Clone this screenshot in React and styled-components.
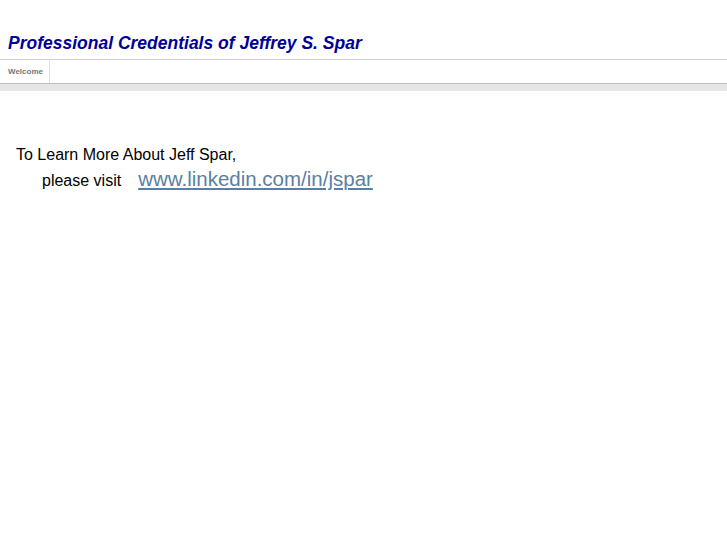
import React from "react";
import styled, { createGlobalStyle } from "styled-components";

const GlobalStyle = createGlobalStyle`
  body {
    margin: 0;
    background: #fff;
    font-family: "Liberation Sans", Arial, sans-serif;
  }
`;

const Header = styled.div`
  padding: 33px 8px 0;
  height: 26px;
  border-bottom: 1px solid #cfcfcf;
`;

const Title = styled.h1`
  margin: 0;
  font-size: 17.5px;
  font-weight: bold;
  font-style: italic;
  color: #000099;
  line-height: 20px;
`;

const NavBar = styled.div`
  display: flex;
  height: 23px;
  border-bottom: 1px solid #bdbdbd;
`;

const Tab = styled.div`
  width: 41px;
  padding-left: 8px;
  border-right: 1px solid #e0e0e0;
  font-size: 8px;
  font-weight: bold;
  color: #777;
  display: flex;
  align-items: center;
`;

const Band = styled.div`
  height: 7px;
  background: #e6e6e6;
`;

const Content = styled.div`
  padding: 52px 16px 0;
  color: #000;
`;

const Line = styled.div`
  font-size: 16px;
  line-height: 24px;
  padding-left: ${(p) => p.indent || 0}px;
`;

const Link = styled.a`
  font-size: 20.5px;
  color: #5a7fa3;
  margin-left: 17px;
`;

export default function App() {
  return (
    <>
      <GlobalStyle />
      <Header>
        <Title>Professional Credentials of Jeffrey S. Spar</Title>
      </Header>
      <NavBar>
        <Tab>Welcome</Tab>
      </NavBar>
      <Band />
      <Content>
        <Line>To Learn More About Jeff Spar,</Line>
        <Line indent={26}>
          please visit
          <Link href="#">www.linkedin.com/in/jspar</Link>
        </Line>
      </Content>
    </>
  );
}
